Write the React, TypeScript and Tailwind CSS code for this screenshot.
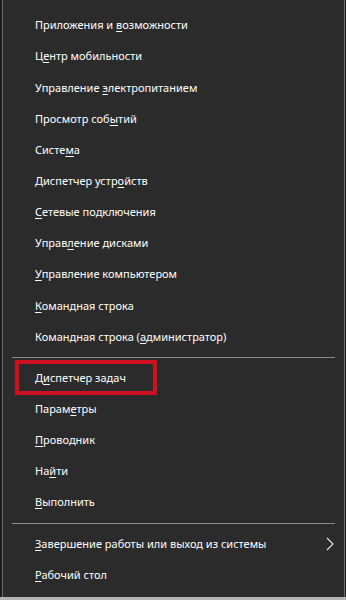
import React from "react";

type Item = { pre: string; key: string; post: string; arrow?: boolean; marked?: boolean };

const groups: Item[][] = [
  [
    { pre: "Приложения и ", key: "в", post: "озможности" },
    { pre: "Ц", key: "е", post: "нтр мобильности" },
    { pre: "Управление ", key: "э", post: "лектропитанием" },
    { pre: "Просмотр соб", key: "ы", post: "тий" },
    { pre: "Систе", key: "м", post: "а" },
    { pre: "Диспетчер устр", key: "о", post: "йств" },
    { pre: "", key: "С", post: "етевые подключения" },
    { pre: "Управ", key: "л", post: "ение дисками" },
    { pre: "", key: "У", post: "правление компьютером" },
    { pre: "", key: "К", post: "омандная строка" },
    { pre: "Командная строка (", key: "а", post: "дминистратор)" },
  ],
  [
    { pre: "Д", key: "и", post: "спетчер задач", marked: true },
    { pre: "Парам", key: "е", post: "тры" },
    { pre: "", key: "П", post: "роводник" },
    { pre: "На", key: "й", post: "ти" },
    { pre: "", key: "В", post: "ыполнить" },
  ],
  [
    { pre: "", key: "З", post: "авершение работы или выход из системы", arrow: true },
    { pre: "", key: "Р", post: "абочий стол" },
  ],
];

function Row({ item }: { item: Item }) {
  return (
    <div className="relative h-[31.15px] flex items-center pl-[32px] pr-[10px]">
      {item.marked && (
        <div className="absolute left-[12px] top-[-3px] w-[142px] h-[35px] border-[4px] border-[#cf1020]" />
      )}
      <span className="flex-1 text-[11px] text-white whitespace-nowrap">
        {item.pre}
        <u className="underline-offset-[2px]">{item.key}</u>
        {item.post}
      </span>
      {item.arrow && (
        <svg width="8" height="14" viewBox="0 0 8 14" className="shrink-0">
          <path d="M1 1 L7 7 L1 13" fill="none" stroke="#e0e0e0" strokeWidth="1.2" />
        </svg>
      )}
    </div>
  );
}

export default function App() {
  return (
    <div
      className="w-[346px] h-[600px] bg-[#1e1e1e] flex flex-col"
      style={{ fontFamily: '"Noto Sans", "Open Sans", sans-serif' }}
    >
      <div className="flex-1 ml-[2px] mr-[1px] border-l border-r border-[#6a6a6a] bg-[#2b2b2b] pt-[10px]">
        {groups.map((group, gi) => (
          <div key={gi}>
            {gi > 0 && (
              <div className="h-[10px] flex items-center px-[9px]">
                <div className="h-px w-full bg-[#8a8a8a]" />
              </div>
            )}
            {group.map((item, i) => (
              <Row key={i} item={item} />
            ))}
          </div>
        ))}
      </div>
      <div className="h-[3px] bg-[#b5b5b5]" />
    </div>
  );
}
